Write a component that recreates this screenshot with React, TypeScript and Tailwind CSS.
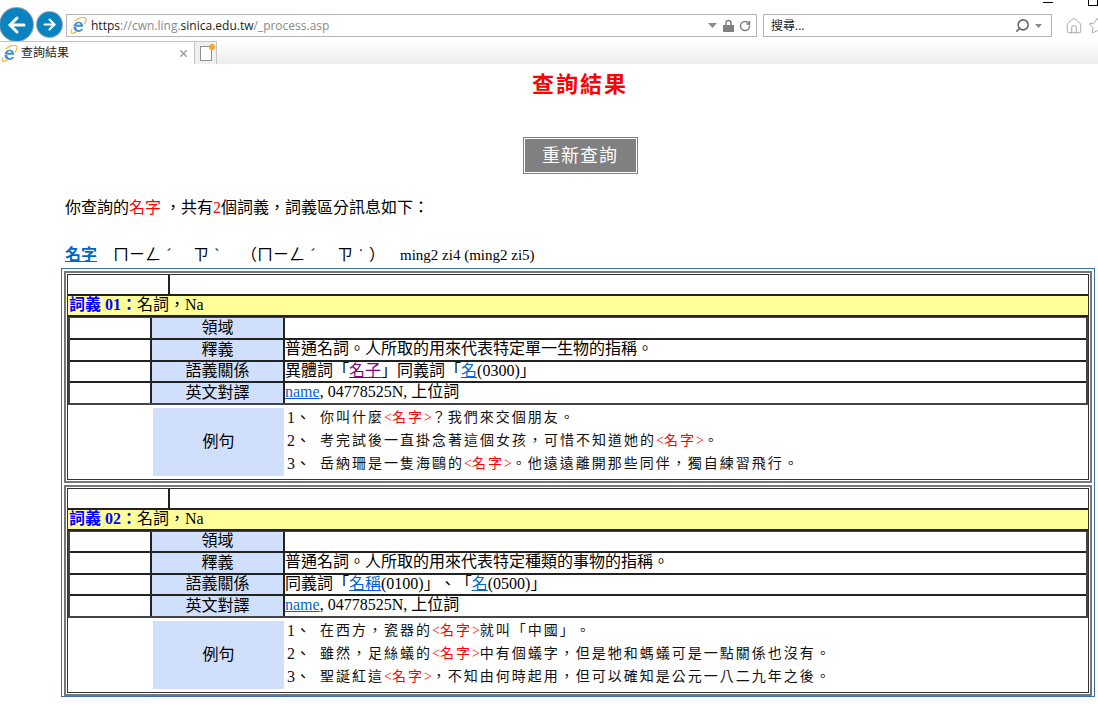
import { Search, X, House, Star, ArrowLeft, ArrowRight, RotateCw } from "lucide-react";

const serif = "font-['Liberation_Serif','Noto_Sans_CJK_TC',serif]";

function IeLogo({ size = 19 }: { size?: number }) {
  return (
    <svg width={size} height={size} viewBox="0 0 20 20" className="shrink-0">
      <path
        d="M4.200 11.400h11.300c.2-3.400-2-5.900-5.200-5.900-3.400 0-5.900 2.600-6.100 5.900zm3.300-2.200c.2-1 1.200-1.800 2.600-1.800s2.400.8 2.500 1.800H7.500zM7.400 13c.3 1.500 1.400 2.500 2.900 2.500 1.200 0 2.100-.5 2.600-1.400h2.500c-.8 2-2.800 3.500-5.300 3.500-3.400 0-6-2.500-6-5.700 0 0 .1-.9.100-1H7.400z"
        fill="#3b8ed0"
      />
      <path
        d="M2.400 14.500C.6 17.800 1 19.500 3 19.300c1.500-.1 3.300-1 5-2.200M5.500 4.700C9.800 1.200 15.800-.7 18 1c1.700 1.300.6 4.600-1.500 7.600"
        fill="none"
        stroke="#f0b429"
        strokeWidth="1.300"
      />
    </svg>
  );
}

function Chrome() {
  return (
    <div className="relative h-16 shrink-0 font-['Open_Sans','Noto_Sans_CJK_TC',sans-serif]">
      <div className="absolute left-[1043px] top-[2px] h-px w-[10px] bg-black" />
      <div className="absolute left-[1088px] -top-px h-[7px] w-[10px] border border-black" />
      <div className="flex h-[41px] items-end">
        <div className="flex h-[33px] w-[33px] shrink-0 items-center justify-center rounded-full bg-[#0a84c1] ring-1 ring-[#9aa7b0]">
          <ArrowLeft size={24} strokeWidth={3} color="#fff" />
        </div>
        <div className="mb-[4px] ml-[4px] flex h-[25px] w-[25px] shrink-0 items-center justify-center rounded-full bg-[#0a84c1] ring-1 ring-[#9aa7b0]">
          <ArrowRight size={17} strokeWidth={3} color="#fff" />
        </div>
        <div className="mb-[4px] ml-[4px] flex h-[23px] w-[691px] shrink-0 items-center border border-[#b5b5b5] pl-[3px] pr-[5px]">
          <IeLogo size={17} />
          <span className="ml-[4px] flex-1 text-[12px] text-[#8a8a8a]">
            <span className="text-[#222]">https</span>://cwn.ling.<span className="text-[#222]">sinica.edu.tw</span>/_process.asp
          </span>
          <svg width="9" height="5" viewBox="0 0 9 5" className="mr-[6px]">
            <path d="M0 0h9L4.500 5z" fill="#8a8a8a" />
          </svg>
          <svg width="11" height="13" viewBox="0 0 11 13" className="mr-[5px]">
            <path d="M3 6V4a2.500 2.500 0 0 1 5 0v2" fill="none" stroke="#808080" strokeWidth="1.500" />
            <rect x="0" y="6" width="11" height="7" fill="#808080" />
          </svg>
          <RotateCw size={12} strokeWidth={3} color="#808080" />
        </div>
        <div className="mb-[4px] ml-[6px] flex h-[23px] w-[289px] shrink-0 items-center border border-[#b5b5b5] pl-[7px] pr-[9px]">
          <span className="flex-1 text-[12px] text-[#222]">搜尋...</span>
          <Search size={15} strokeWidth={2.500} color="#666" className="mr-[5px] -scale-x-100" />
          <svg width="7" height="4" viewBox="0 0 7 4">
            <path d="M0 0h7L3.500 4z" fill="#8a8a8a" />
          </svg>
        </div>
        <House size={18} strokeWidth={1} color="#8f8f8f" className="mb-[6px] ml-[13px] shrink-0" />
        <Star size={18} strokeWidth={1} color="#8f8f8f" className="mb-[6px] ml-[5px] shrink-0" />
      </div>
      <div className="flex h-[23px] bg-gradient-to-b from-white to-[#ededed]">
        <div className="flex w-[195px] items-center border-r border-t border-[#c4c4c4] bg-white pl-[1px] pr-[5px]">
          <IeLogo size={17} />
          <span className="ml-[3px] flex-1 text-[12px] text-[#222]">查詢結果</span>
          <X size={11} strokeWidth={3} color="#9a9a9a" />
        </div>
        <div className="flex w-[22px] items-center justify-center border-r border-t border-[#c4c4c4] bg-[#f0f0f0]">
          <div className="relative h-[15px] w-[12px] border border-[#8f8f8f] bg-white">
            <span className="absolute -right-[4px] -top-[3px] h-[6px] w-[6px] rounded-full bg-[#f5a623]" />
          </div>
        </div>
      </div>
    </div>
  );
}

function Link({ children, cls = "text-[#0066cc]" }: { children: string; cls?: string }) {
  return <span className={`underline ${cls}`}>{children}</span>;
}

function Line({ n, children }: { n: number; children: React.ReactNode }) {
  return (
    <div className="flex h-[23px] items-center text-[14px] tracking-[2px] text-[#111]">
      <span className="w-[35px] pl-[2px] text-[16px] tracking-normal">{n}、</span>
      <span>{children}</span>
    </div>
  );
}

function Word() {
  return (
    <span className="text-[#ff0000]">
      <span className="tracking-normal">&lt;</span>名字<span className="tracking-normal">&gt;</span>
    </span>
  );
}

// tone marks take a full cell in the reference, so every symbol gets one
function Bopomofo({ text }: { text: string }) {
  return (
    <span className="ml-[16px] flex w-[287px]">
      {Array.from(text).map((c, i) => (
        <span key={i} className="inline-block w-4 text-center">
          {c}
        </span>
      ))}
    </span>
  );
}

type Row = { label: string; h: string; body: React.ReactNode };

function Sense({ no, rows, lines }: { no: string; rows: Row[]; lines: React.ReactNode[] }) {
  return (
    <div className="border-2 border-[#777] p-px">
      <div className="border border-[#333]">
        <div className="flex h-[21px] border-b-2 border-[#222]">
          <div className="w-[102px] border-r-2 border-[#222]" />
        </div>
        <div className="flex h-[21px] items-center border-b-2 border-[#222] bg-[#ffff99] pb-[2px] pl-[1px] text-[16px]">
          <span className="font-bold text-[#0000ff]">詞義 {no}：</span>
          <span>名詞，Na</span>
        </div>
        <div className="border-x-2 border-b-2 border-t border-[#444] bg-white">
          {rows.map((r, i) => (
            <div key={r.label} className={`flex ${r.h} ${i < rows.length - 1 ? "border-b-2 border-[#222]" : ""}`}>
              <div className="w-[82px] shrink-0 border-r-2 border-[#222]" />
              <div className="flex w-[133px] shrink-0 items-center justify-center border-r-2 border-[#222] bg-[#d0e0fc] pb-px text-[16px]">
                {r.label}
              </div>
              <div className="flex flex-1 items-center pb-[2px] text-[16px]">{r.body}</div>
            </div>
          ))}
        </div>
        <div className="flex h-[74px] items-center">
          <div className="w-[85px] shrink-0" />
          <div className="flex h-[68px] w-[131px] shrink-0 items-center justify-center bg-[#d0e0fc] text-[16px]">例句</div>
          <div className="flex-1 pb-[3px] pl-px">
            {lines.map((l, i) => (
              <Line key={i} n={i + 1}>
                {l}
              </Line>
            ))}
          </div>
        </div>
      </div>
    </div>
  );
}

const name = (
  <>
    <Link>name</Link>, 04778525N, 上位詞
  </>
);

export default function App() {
  return (
    <div className={`flex h-[704px] w-[1098px] flex-col overflow-hidden bg-white text-black [text-spacing-trim:space-all] ${serif}`}>
      <Chrome />
      <div className="flex flex-col pl-[61px] pr-[3px]">
        <h1 className="mt-[8px] h-[26px] pl-[4px] text-center text-[22px] font-bold leading-[26px] tracking-[2px] text-[#ff0000]">查詢結果</h1>
        <div className="mt-[39px] flex justify-center pl-[4px]">
          <button className="h-[37px] w-[115px] border-2 border-white bg-[#808080] pt-px text-[18px] tracking-[1px] text-white outline outline-1 -outline-offset-1 outline-[#808080]">
            重新查詢
          </button>
        </div>
        <p className="ml-[4px] mt-[22px] h-[24px] text-[16px] leading-[24px]">
          你查詢的<span className="text-[#ff0000]">名字</span> ，共有<span className="text-[#ff0000]">2</span>個詞義，詞義區分訊息如下：
        </p>
        <div className="ml-[4px] mt-[23px] flex h-[24px] items-center text-[16px] leading-[24px]">
          <span className="font-bold text-[#0066cc] underline">名字</span>
          <Bopomofo text="ㄇㄧㄥˊ　ㄗˋ　（ㄇㄧㄥˊ　ㄗ˙）" />
          <span className="text-[15px]">ming2 zi4 (ming2 zi5)</span>
        </div>
        <div className="mt-[1px] flex h-[429px] flex-col gap-[2px] border border-[#3a72a8] p-[2px]">
          <Sense
            no="01"
            rows={[
              { label: "領域", h: "h-[22px]", body: null },
              { label: "釋義", h: "h-[22px]", body: "普通名詞。人所取的用來代表特定單一生物的指稱。" },
              {
                label: "語義關係",
                h: "h-[21px]",
                body: (
                  <>
                    異體詞「<Link cls="text-[#800080]">名子</Link>」同義詞「<Link>名</Link>(0300)」
                  </>
                ),
              },
              { label: "英文對譯", h: "h-[20px]", body: name },
            ]}
            lines={[
              <>你叫什麼<Word />？我們來交個朋友。</>,
              <>考完試後一直掛念著這個女孩，可惜不知道她的<Word />。</>,
              <>岳納珊是一隻海鷗的<Word />。他遠遠離開那些同伴，獨自練習飛行。</>,
            ]}
          />
          <Sense
            no="02"
            rows={[
              { label: "領域", h: "h-[21px]", body: null },
              { label: "釋義", h: "h-[22px]", body: "普通名詞。人所取的用來代表特定種類的事物的指稱。" },
              {
                label: "語義關係",
                h: "h-[21px]",
                body: (
                  <>
                    同義詞「<Link>名稱</Link>(0100)」、「<Link>名</Link>(0500)」
                  </>
                ),
              },
              { label: "英文對譯", h: "h-[20px]", body: name },
            ]}
            lines={[
              <>在西方，瓷器的<Word />就叫「中國」。</>,
              <>雖然，足絲蟻的<Word />中有個蟻字，但是牠和螞蟻可是一點關係也沒有。</>,
              <>聖誕紅這<Word />，不知由何時起用，但可以確知是公元一八二九年之後。</>,
            ]}
          />
        </div>
      </div>
    </div>
  );
}
